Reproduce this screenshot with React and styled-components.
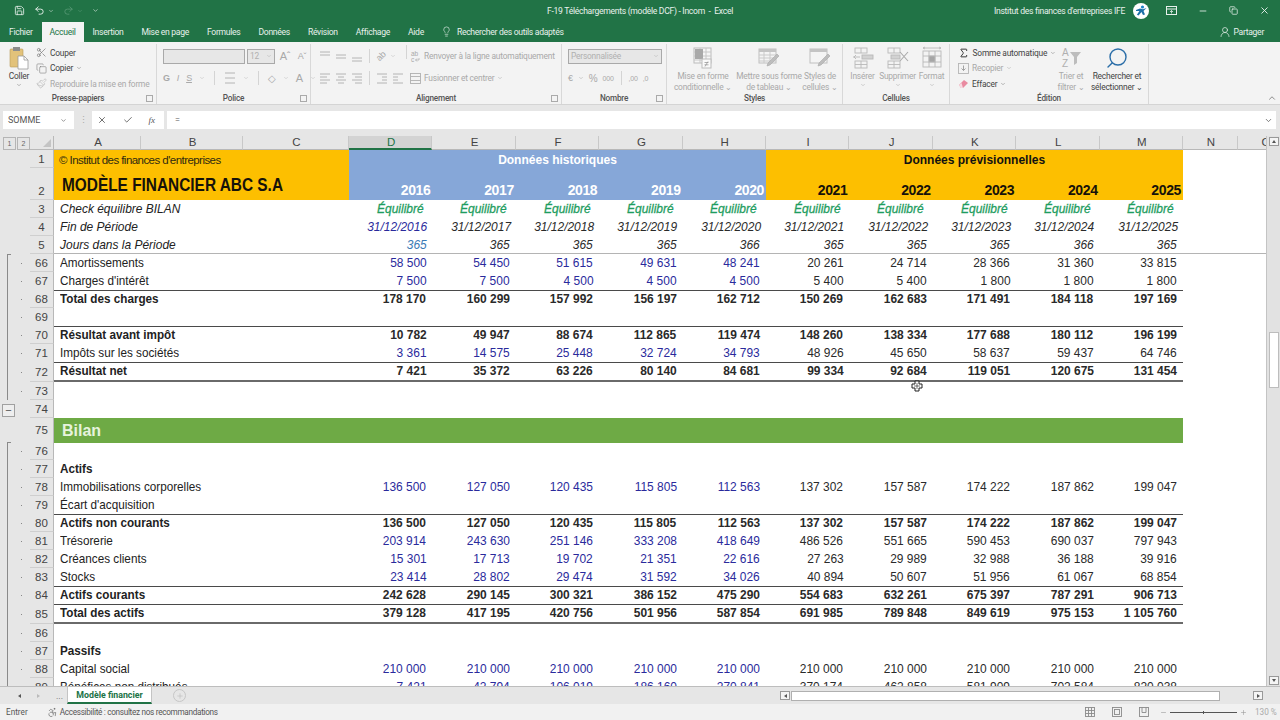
import React from "react";
import styled, { createGlobalStyle } from "styled-components";
import { Save, Undo2, Redo2, Lightbulb, UserRound, Scissors, Copy, Paintbrush, X, Check, ChevronDown, Search, Sigma, ChevronUp, Minus, Plus, Accessibility } from "lucide-react";

const GlobalStyle = createGlobalStyle`
  html, body {
    margin: 0;
    padding: 0;
    background: #e6e6e6;
    overflow: hidden;
  }
`;

const COLUMNS = "30px 24px 87px 102px 106px repeat(10, 83.4px) 55px 55px";
const UI_FONT = `Roboto, "Noto Sans", sans-serif`;
const CELL_FONT = `"Liberation Sans", Arial, sans-serif`;

// Sheet content
const rows = [
  { n: 66, label: "Amortissements", vals: "58 500,54 450,51 615,49 631,48 241,20 261,24 714,28 366,31 360,33 815", start: true },
  { n: 67, label: "Charges d'intérêt", vals: "7 500,7 500,4 500,4 500,4 500,5 400,5 400,1 800,1 800,1 800", line: "thin" },
  { n: 68, label: "Total des charges", bold: true, vals: "178 170,160 299,157 992,156 197,162 712,150 269,162 683,171 491,184 118,197 169" },
  { n: 69, line: "thin" },
  { n: 70, label: "Résultat avant impôt", bold: true, vals: "10 782,49 947,88 674,112 865,119 474,148 260,138 334,177 688,180 112,196 199" },
  { n: 71, label: "Impôts sur les sociétés", vals: "3 361,14 575,25 448,32 724,34 793,48 926,45 650,58 637,59 437,64 746", line: "thin" },
  { n: 72, label: "Résultat net", bold: true, vals: "7 421,35 372,63 226,80 140,84 681,99 334,92 684,119 051,120 675,131 454", line: "thick", h: 20 },
  { n: 73 },
  { n: 74, minus: true },
  { n: 75, section: "Bilan", h: 24, noBar: true },
  { n: 76, start: true },
  { n: 77, label: "Actifs", bold: true },
  { n: 78, label: "Immobilisations corporelles", vals: "136 500,127 050,120 435,115 805,112 563,137 302,157 587,174 222,187 862,199 047" },
  { n: 79, label: "Écart d'acquisition", line: "thin" },
  { n: 80, label: "Actifs non courants", bold: true, vals: "136 500,127 050,120 435,115 805,112 563,137 302,157 587,174 222,187 862,199 047" },
  { n: 81, label: "Trésorerie", vals: "203 914,243 630,251 146,333 208,418 649,486 526,551 665,590 453,690 037,797 943" },
  { n: 82, label: "Créances clients", vals: "15 301,17 713,19 702,21 351,22 616,27 263,29 989,32 988,36 188,39 916" },
  { n: 83, label: "Stocks", vals: "23 414,28 802,29 474,31 592,34 026,40 894,50 607,51 956,61 067,68 854", line: "thin" },
  { n: 84, label: "Actifs courants", bold: true, vals: "242 628,290 145,300 321,386 152,475 290,554 683,632 261,675 397,787 291,906 713", line: "thin" },
  { n: 85, label: "Total des actifs", bold: true, vals: "379 128,417 195,420 756,501 956,587 854,691 985,789 848,849 619,975 153,1 105 760", line: "thick", h: 20 },
  { n: 86 },
  { n: 87, label: "Passifs", bold: true },
  { n: 88, label: "Capital social", vals: "210 000,210 000,210 000,210 000,210 000,210 000,210 000,210 000,210 000,210 000" },
  { n: 89, label: "Bénéfices non distribués", vals: "7 421,42 794,106 019,186 160,270 841,370 174,462 858,581 909,702 584,820 038" },
];
const columnLetters = ["A", "B", "C", "D", "E", "F", "G", "H", "I", "J", "K", "L", "M", "N", "O"];
const years = [2016, 2017, 2018, 2019, 2020, 2021, 2022, 2023, 2024, 2025];

// Shell
const Page = styled.div`
  width: 1280px;
  height: 720px;
  display: flex;
  flex-direction: column;
  overflow: hidden;
  font-family: ${UI_FONT};
`;

const TitleBar = styled.div`
  height: 21px;
  background: #217346;
  color: #e8f1ec;
  display: grid;
  grid-template-columns: 1fr 187px 1fr;
  align-items: center;
  font-size: 8.6px;
  letter-spacing: -0.3px;
`;

const Qat = styled.div`
  display: flex;
  align-items: center;
  gap: 9px;
  padding-left: 14px;
`;

const DocTitle = styled.span`
  white-space: pre;
  text-align: center;
`;

const TitleRight = styled.div`
  display: flex;
  align-items: center;
  justify-content: flex-end;
`;

const WindowBtn = styled.span`
  width: 31px;
  display: flex;
  justify-content: center;
  color: #e8f1ec;
`;

const Avatar = styled.svg`
  width: 16px;
  height: 16px;
  margin: 0 7px 0 8px;
`;

const TabBar = styled.div`
  height: 21px;
  background: #217346;
  display: flex;
  align-items: stretch;
  font-size: 8.6px;
  letter-spacing: -0.3px;
  color: #e8f1ec;
`;

const Tab = styled.div`
  padding: 0 ${(p) => (p.$active ? 8 : 9)}px;
  margin-top: ${(p) => (p.$active ? 1 : 0)}px;
  display: flex;
  align-items: center;
  background: ${(p) => (p.$active ? "#f3f3f3" : "transparent")};
  color: ${(p) => (p.$active ? "#217346" : "inherit")};
`;

const TellMe = styled.div`
  display: flex;
  align-items: center;
  gap: 5px;
  margin-left: 8px;
`;

const Share = styled.div`
  margin-left: auto;
  margin-right: 16px;
  display: flex;
  align-items: center;
  gap: 2px;
`;

// Ribbon
const Ribbon = styled.div`
  height: 63px;
  background: #f3f3f3;
  border-bottom: 1px solid #d4d4d4;
  box-sizing: border-box;
  display: flex;
  position: relative;
  font-size: 8.4px;
  letter-spacing: -0.2px;
  color: #444;
`;

const Group = styled.div`
  width: ${(p) => p.$w}px;
  box-sizing: border-box;
  display: flex;
  flex-direction: column;
  border-right: 1px solid #d8d8d8;
  margin: 2px 0 0;
  position: relative;
  flex-shrink: 0;
`;

const GroupBody = styled.div`
  flex: 1;
  display: flex;
  padding: 1px 0 0 ${(p) => p.$pad || 0}px;
  gap: ${(p) => p.$gap || 0}px;
`;

const GroupLabel = styled.div`
  height: 12px;
  line-height: 12px;
  text-align: center;
  color: #555;
  font-size: 8.2px;
  font-weight: 500;
`;

const Launcher = styled.span`
  position: absolute;
  right: 3px;
  bottom: 2px;
  width: 5px;
  height: 5px;
  border: 1px solid #aaa;
`;

const Stack = styled.div`
  display: flex;
  flex-direction: column;
  margin-left: ${(p) => p.$ml || 0}px;
  width: ${(p) => (p.$w ? `${p.$w}px` : "auto")};
`;

const SmallRow = styled.div`
  height: ${(p) => p.$h || 15.5}px;
  display: flex;
  align-items: center;
  gap: ${(p) => p.$gap ?? 3}px;
  white-space: nowrap;
  color: ${(p) => (p.$off ? "#a9a9a9" : "#444")};
`;

const LargeBtn = styled.div`
  width: ${(p) => p.$w}px;
  display: flex;
  flex-direction: column;
  align-items: center;
  text-align: center;
  line-height: 10.5px;
  white-space: nowrap;
  color: ${(p) => (p.$off ? "#a9a9a9" : "#444")};
  flex-shrink: 0;
`;

const IconZone = styled.div`
  height: 26px;
  display: flex;
  align-items: center;
  justify-content: center;
`;

const Combo = styled.div`
  width: ${(p) => p.$w}px;
  height: 15px;
  box-sizing: border-box;
  border: 1px solid #a9a9a9;
  background: #e7e7e7;
  color: #b0b0b0;
  display: flex;
  align-items: center;
  justify-content: space-between;
  padding: 0 2px;
  font-size: 8.4px;
`;

const OffGlyph = styled.span`
  color: #a9a9a9;
  font-family: ${CELL_FONT};
  font-size: ${(p) => p.$size || 9}px;
  font-weight: ${(p) => p.$weight || 400};
  font-style: ${(p) => (p.$italic ? "italic" : "normal")};
  text-decoration: ${(p) => (p.$under ? "underline" : "none")};
  width: ${(p) => p.$w || "auto"};
  text-align: center;
  transform: ${(p) => (p.$tilt ? "rotate(-45deg)" : "none")};
`;

const ToolSep = styled.span`
  width: 1px;
  height: 14px;
  background: #d4d4d4;
  margin: 0 2px;
`;

const RibbonCaret = styled.span`
  position: absolute;
  right: 3px;
  bottom: 1px;
  color: #777;
  display: flex;
`;

// Formula bar
const FormulaArea = styled.div`
  height: 31px;
  box-sizing: border-box;
  background: #e6e6e6;
  padding: 6px 4px 7px 3px;
  display: flex;
  align-items: stretch;
  font-size: 9px;
  color: #555;
`;

const NameBox = styled.div`
  width: 71px;
  background: #fff;
  display: flex;
  align-items: center;
  justify-content: space-between;
  padding: 0 7px 0 5px;
  box-sizing: border-box;
`;

const Grip = styled.span`
  width: 18px;
  display: flex;
  justify-content: center;
  align-items: center;
  color: #aaa;
`;

const FormulaTools = styled.div`
  width: 72px;
  background: #fff;
  display: flex;
  align-items: center;
  justify-content: space-between;
  padding: 0 9px 0 5px;
  box-sizing: border-box;
  font-family: "Liberation Serif", serif;
  font-style: italic;
`;

const FormulaInput = styled.div`
  flex: 1;
  margin-left: 3px;
  background: #fff;
  display: flex;
  align-items: center;
  justify-content: space-between;
  padding: 0 3px 0 8px;
`;

// Sheet
const SheetArea = styled.div`
  height: 550px;
  display: flex;
  position: relative;
`;

const Grid = styled.div`
  flex: 1;
  min-width: 0;
  overflow: hidden;
  background: #fff;
  font-family: ${CELL_FONT};
  font-size: 13px;
  color: #222;
`;

const GridRow = styled.div`
  display: grid;
  grid-template-columns: ${COLUMNS};
  height: ${(p) => p.$h || 18}px;
  box-sizing: border-box;
`;

const OutlineLevels = styled.div`
  background: #e6e6e6;
  display: flex;
  padding: 1px 0 0 3px;
  gap: 1px;
`;

const LevelBtn = styled.span`
  width: 11px;
  height: 11px;
  border: 1px solid #b5b5b5;
  font-size: 7px;
  color: #666;
  line-height: 11px;
  text-align: center;
`;

const Corner = styled.div`
  background: #e6e6e6;
  border-right: 1px solid #b8b8b8;
  border-bottom: 1px solid #b8b8b8;
  display: flex;
  align-items: flex-end;
  justify-content: flex-end;
  padding: 0 2px 2px 0;
`;

const Triangle = styled.span`
  width: 0;
  height: 0;
  border-left: 8px solid transparent;
  border-bottom: 8px solid #c4c4c4;
`;

const ColHead = styled.div`
  background: ${(p) => (p.$on ? "#d3d3d3" : "#e6e6e6")};
  border-right: 1px solid #c8c8c8;
  border-bottom: ${(p) => (p.$on ? "2px solid #217346" : "1px solid #b8b8b8")};
  box-sizing: border-box;
  color: ${(p) => (p.$on ? "#217346" : "#444")};
  font-size: 11.5px;
  line-height: 13px;
  padding-left: 2px;
  text-align: center;
  overflow: hidden;
`;

const Gutter = styled.div`
  background: #e6e6e6;
  display: flex;
  align-items: stretch;
  padding-left: 7px;
  position: relative;
`;

const OutlineBar = styled.span`
  width: 1px;
  background: ${(p) => (p.$on ? "#8a8a8a" : "transparent")};
  &::after {
    content: "";
    display: ${(p) => (p.$start ? "block" : "none")};
    width: 4px;
    height: 1px;
    background: #8a8a8a;
  }
`;

const Dot = styled.span`
  width: 1px;
  height: 1px;
  background: #888;
  align-self: center;
  margin-left: 13px;
`;

const MinusBox = styled.span`
  position: absolute;
  left: 2px;
  top: 4px;
  width: 11px;
  height: 11px;
  border: 1px solid #a0a0a0;
  background: #eee;
  color: #555;
  font-size: 11px;
  line-height: 10px;
  text-align: center;
`;

const RowHead = styled.div`
  background: #e6e6e6;
  border-right: 1px solid #b8b8b8;
  border-bottom: 1px solid #cfcfcf;
  box-sizing: border-box;
  display: flex;
  align-items: ${(p) => (p.$low ? "flex-end" : "center")};
  justify-content: center;
  padding-bottom: ${(p) => (p.$low ? 2 : 0)}px;
  color: #444;
  font-size: 11.5px;
`;

const Band = styled.div`
  grid-column: span ${(p) => p.$span || 1};
  background: ${(p) => p.$bg};
  color: ${(p) => p.$color || "#111"};
  font-weight: ${(p) => p.$weight || 700};
  font-size: ${(p) => p.$size || 12}px;
  letter-spacing: ${(p) => p.$ls || 0}px;
  text-align: ${(p) => p.$align || "center"};
  padding: 0 ${(p) => p.$padR || 0}px 0 ${(p) => p.$padL || 0}px;
  line-height: ${(p) => p.$lh || "20px"};
  white-space: nowrap;
  overflow: hidden;
`;

const TitleText = styled.span`
  display: inline-block;
  transform: scaleX(0.88);
  transform-origin: left center;
`;

const Fit = styled.span`
  display: inline-block;
  transform: scaleX(${(p) => p.$sx || 0.92});
  transform-origin: ${(p) => (p.$right ? "right" : "left")} center;
`;

const Label = styled.div`
  grid-column: span 3;
  padding-left: 6px;
  line-height: 18px;
  white-space: nowrap;
  font-weight: ${(p) => (p.$bold ? 700 : 400)};
  font-style: ${(p) => (p.$italic ? "italic" : "normal")};
  border-bottom: ${(p) => p.$border || "none"};
`;

const Cell = styled.div`
  text-align: right;
  padding-right: ${(p) => p.$pr || 6}px;
  line-height: 18px;
  white-space: nowrap;
  font-weight: ${(p) => (p.$bold ? 700 : 400)};
  font-style: ${(p) => (p.$italic ? "italic" : "normal")};
  color: ${(p) => p.$color || "#2a2a2a"};
  border-bottom: ${(p) => p.$border || "none"};
  -webkit-text-stroke: ${(p) => (p.$semi ? "0.3px" : "0")};
`;

const Filler = styled.div`
  grid-column: span 2;
`;

const FrozenLine = styled.div`
  grid-column: 3 / -1;
  height: 1px;
  background: #b4b4b4;
  margin-top: -1px;
`;

const SectionBand = styled.div`
  grid-column: span 13;
  background: #6eaa45;
  color: #e6f3dc;
  font-weight: 700;
  font-size: 16px;
  line-height: 25px;
  padding-left: 8px;
`;

const CursorMark = styled.svg`
  position: absolute;
  left: 911px;
  top: 244px;
  width: 12px;
  height: 12px;
`;

const VScroll = styled.div`
  width: 14px;
  background: #e2e2e2;
  border-left: 1px solid #c4c4c4;
  display: flex;
  flex-direction: column;
  align-items: center;
  padding: 1px 0;
  box-sizing: border-box;
`;

const ScrollBtn = styled.span`
  width: 10px;
  height: 9px;
  box-sizing: border-box;
  border: 1px solid #999;
  background: #f4f4f4;
  display: flex;
  align-items: center;
  justify-content: center;
  flex-shrink: 0;
`;

const Arrow = styled.span`
  width: 0;
  height: 0;
  opacity: ${(p) => (p.$dim ? 0.3 : 1)};
  ${(p) =>
    p.$dir === "up" && "border-left: 2.5px solid transparent; border-right: 2.5px solid transparent; border-bottom: 3px solid #555;"}
  ${(p) =>
    p.$dir === "down" && "border-left: 2.5px solid transparent; border-right: 2.5px solid transparent; border-top: 3px solid #555;"}
  ${(p) =>
    p.$dir === "left" && "border-top: 2.5px solid transparent; border-bottom: 2.5px solid transparent; border-right: 3px solid #555;"}
  ${(p) =>
    p.$dir === "right" && "border-top: 2.5px solid transparent; border-bottom: 2.5px solid transparent; border-left: 3px solid #555;"}
`;

const VThumb = styled.span`
  width: 10px;
  height: 56px;
  margin-top: 186px;
  margin-bottom: auto;
  background: #fff;
  border: 1px solid #bdbdbd;
  box-sizing: border-box;
`;

// Sheet tabs and status
const SheetTabs = styled.div`
  height: 18px;
  background: #e6e6e6;
  border-top: 1px solid #bdbdbd;
  box-sizing: border-box;
  display: flex;
  align-items: stretch;
  font-size: 8.8px;
  color: #666;
`;

const TabNav = styled.div`
  width: 67px;
  display: flex;
  align-items: center;
  gap: 16px;
  padding-left: 18px;
  box-sizing: border-box;
`;

const SheetTab = styled.div`
  width: 85px;
  background: #fff;
  color: #217346;
  font-weight: 700;
  border-bottom: 2px solid #217346;
  border-left: 1px solid #c4c4c4;
  border-right: 1px solid #c4c4c4;
  box-sizing: border-box;
  display: flex;
  align-items: center;
  justify-content: center;
`;

const AddSheet = styled.span`
  width: 11px;
  height: 11px;
  border-radius: 50%;
  border: 1px solid #c6c6c6;
  color: #c0c0c0;
  margin: 2px 0 0 21px;
  display: flex;
  align-items: center;
  justify-content: center;
`;

const HScroll = styled.div`
  margin-left: auto;
  width: 483px;
  display: flex;
  align-items: center;
  margin-right: 17px;
`;

const HThumb = styled.span`
  flex: 1;
  height: 10px;
  background: #fff;
  border: 1px solid #b0b0b0;
  box-sizing: border-box;
  margin: 0 33px 0 1px;
`;

const StatusBar = styled.div`
  height: 16px;
  background: #f1f1f1;
  display: flex;
  align-items: center;
  font-size: 8.2px;
  color: #555;
  padding-left: 6px;
`;

const A11y = styled.div`
  display: flex;
  align-items: center;
  gap: 2px;
  margin-left: 19px;
  letter-spacing: -0.3px;
`;

const ViewIcons = styled.div`
  margin-left: auto;
  display: flex;
  align-items: center;
  gap: 17px;
`;

const ZoomSlider = styled.div`
  display: flex;
  align-items: center;
  gap: 3px;
  margin: 0 8px 0 11px;
  color: #999;
`;

const ZoomTrack = styled.span`
  width: 67px;
  height: 1px;
  background: #555;
  display: flex;
  justify-content: center;
  &::after {
    content: "";
    width: 1px;
    height: 3px;
    margin-top: -1px;
    background: #555;
  }
`;

const ZoomValue = styled.span`
  color: #aaa;
  width: 25px;
  white-space: nowrap;
`;

// Small drawings
const LinesIcon = ({ rows: lineRows, color = "#b4b4b4", size = 12 }) => (
  <svg width={size} height={size} viewBox="0 0 12 12">
    {lineRows.map(([y, a, b]) => (
      <line key={y} x1={a} x2={b} y1={y} y2={y} stroke={color} strokeWidth="1" />
    ))}
  </svg>
);

const PasteIcon = () => (
  <svg width="20" height="24" viewBox="0 0 20 24">
    <rect x="1" y="3" width="13" height="18" rx="1" fill="#e2c27a" stroke="#b89a58" strokeWidth=".6" />
    <rect x="4" y="1" width="7" height="4" fill="#8d8d8d" />
    <path d="M9 10h6l4 4v9H9z" fill="#fff" stroke="#9a9a9a" strokeWidth=".8" />
    <path d="M15 10v4h4" fill="none" stroke="#9a9a9a" strokeWidth=".8" />
  </svg>
);

const CondFormatIcon = () => (
  <svg width="20" height="22" viewBox="0 0 20 22">
    <rect x="1" y="1" width="17" height="15" fill="#f6f6f6" stroke="#bcbcbc" />
    <path d="M1 5h17M1 9h17M1 13h17M7 1v15M13 1v15" stroke="#c8c8c8" />
    <rect x="2" y="2" width="8" height="10" fill="#a9a9a9" />
    <rect x="9" y="12" width="9" height="9" fill="#fafafa" stroke="#bbb" />
    <path d="M11.5 15.5h4M11.5 17.8h4M15 14.5l-3 5" stroke="#999" strokeWidth=".8" />
  </svg>
);

const TableBrushIcon = ({ dense }) => (
  <svg width="22" height="20" viewBox="0 0 22 20">
    <rect x="1" y="1" width="17" height="14" fill="#f4f4f4" stroke="#c0c0c0" />
    <rect x="1" y="1" width="17" height="3" fill="#c4c4c4" />
    {dense && <path d="M1 7h17M1 10h17M1 13h17M6 4v11M12 4v11" stroke="#cacaca" />}
    <path d="M21 8l-9 9-3 1 1-3 9-9z" fill="#bdbdbd" stroke="#a8a8a8" strokeWidth=".6" />
  </svg>
);

const CellsIcon = ({ kind }) => (
  <svg width="24" height="24" viewBox="0 0 24 24" fill="none" stroke="#b9b9b9" strokeWidth=".9">
    {kind === "insert" && (
      <>
        <rect x="4" y="2" width="12" height="5" />
        <path d="M10 2v5" />
        <rect x="4" y="15" width="12" height="7" />
        <path d="M10 15v7M4 18.5h12" />
        <rect x="11" y="9" width="11" height="4" fill="#d2d2d2" />
        <path d="M2 11h7M5 9l-2 2 2 2" />
      </>
    )}
    {kind === "delete" && (
      <>
        <rect x="2" y="2" width="12" height="5" />
        <path d="M8 2v5" />
        <rect x="2" y="15" width="12" height="7" />
        <path d="M8 15v7M2 18.5h12" />
        <rect x="5" y="9" width="9" height="4" fill="#d2d2d2" />
        <path d="M14 6l8 9M22 6l-8 9" stroke="#a9a9a9" strokeWidth="1.1" />
      </>
    )}
    {kind === "format" && (
      <>
        <rect x="3" y="5" width="18" height="16" />
        <path d="M3 10h18M3 16h18M9 5v16M15 5v16" />
        <rect x="9" y="10" width="6" height="6" fill="#a6a6a6" />
        <path d="M3 2h18M5 1l-2 1 2 1M19 1l2 1-2 1" />
      </>
    )}
  </svg>
);

const SortIcon = () => (
  <svg width="22" height="22" viewBox="0 0 22 22">
    <text x="2" y="9" fontSize="10" fill="#b0b0b0" fontFamily="Liberation Sans">A</text>
    <text x="2" y="20" fontSize="10" fill="#b0b0b0" fontFamily="Liberation Sans">Z</text>
    <path d="M10 5h11l-4 5v6l-3 2v-8z" fill="#bdbdbd" />
  </svg>
);

const WrapIcon = () => (
  <svg width="11" height="12" viewBox="0 0 11 12">
    <text x="1" y="5.5" fontSize="6.5" fill="#a9a9a9" fontFamily="Liberation Sans">ab</text>
    <text x="1" y="11.5" fontSize="6.5" fill="#a9a9a9" fontFamily="Liberation Sans">c</text>
    <path d="M9 8v2H5.5M7 8.5L5.5 10 7 11.5" fill="none" stroke="#a9a9a9" strokeWidth=".7" />
  </svg>
);

const MergeIcon = () => (
  <svg width="11" height="11" viewBox="0 0 11 11" fill="none" stroke="#b0b0b0" strokeWidth=".9">
    <rect x=".5" y=".5" width="10" height="10" />
    <path d="M.5 3.5h10M.5 7.5h10" />
  </svg>
);

const FillIcon = () => (
  <svg width="11" height="11" viewBox="0 0 11 11" fill="none" stroke="#b5b5b5" strokeWidth=".9">
    <rect x=".5" y=".5" width="10" height="10" />
    <path d="M5.5 2.5v5M3.5 5.5l2 2 2-2" stroke="#999" />
  </svg>
);

const EraserIcon = () => (
  <svg width="11" height="11" viewBox="0 0 11 11">
    <path d="M1 7l5-5 4 3-5 5H3z" fill="#e98aa0" />
    <path d="M1 7l2 3h2L3.5 5z" fill="#f6dbe1" />
  </svg>
);

const RibbonDisplayIcon = () => (
  <svg width="11" height="9" viewBox="0 0 11 9" fill="none" stroke="#e8f1ec">
    <rect x=".5" y=".5" width="10" height="8" />
    <path d="M.5 3h10" />
    <path d="M5.5 7.5V4.5M4 6l1.5-1.5L7 6" strokeWidth=".8" />
  </svg>
);

const ViewIcon = ({ kind }) => (
  <svg width="10" height="10" viewBox="0 0 10 10" fill="none" stroke="#8a8a8a" strokeWidth=".9">
    <rect x=".5" y=".5" width="9" height="9" />
    {kind === "normal" && <path d="M.5 3.5h9M.5 6.5h9M3.5.5v9M6.5.5v9" />}
    {kind === "page" && <rect x="2.5" y="2.5" width="5" height="5" />}
    {kind === "break" && <path d="M3 .5v5h4v-5" />}
  </svg>
);

const AvatarMark = () => (
  <Avatar viewBox="0 0 16 16">
    <circle cx="8" cy="8" r="8" fill="#fff" />
    <circle cx="9.5" cy="4" r="1.6" fill="#1d86c8" />
    <path d="M3 7l4-1.5 3 .8 3.5-1.3-3 3 1.5 3.5-2 .5-1.5-3-3 3.5-1.6-.8 2.5-3.6L3 8z" fill="#1d6fa8" />
  </Avatar>
);

const RibbonPanel = () => (
  <Ribbon>
    <Group $w={157}>
      <GroupBody $pad={7}>
        <LargeBtn $w={24}>
          <IconZone>
            <PasteIcon />
          </IconZone>
          Coller
          <ChevronDown size={6} color="#777" />
        </LargeBtn>
        <Stack $ml={5}>
          <SmallRow>
            <Scissors size={11} color="#666" strokeWidth={1.3} />
            Couper
          </SmallRow>
          <SmallRow>
            <Copy size={11} color="#777" strokeWidth={1.2} />
            Copier
            <ChevronDown size={6} color="#777" />
          </SmallRow>
          <SmallRow $off>
            <Paintbrush size={11} color="#b5b5b5" strokeWidth={1.3} />
            Reproduire la mise en forme
          </SmallRow>
        </Stack>
      </GroupBody>
      <GroupLabel>Presse-papiers</GroupLabel>
      <Launcher />
    </Group>

    <Group $w={154}>
      <GroupBody $pad={6}>
        <Stack>
          <SmallRow $h={22} $gap={2}>
            <Combo $w={82} />
            <Combo $w={28}>
              12
              <ChevronDown size={6} />
            </Combo>
            <OffGlyph $size={11} $w="16px">Aˆ</OffGlyph>
            <OffGlyph $size={9} $w="14px">Aˇ</OffGlyph>
          </SmallRow>
          <SmallRow $h={22} $gap={7}>
            <OffGlyph $weight={700}>G</OffGlyph>
            <OffGlyph $italic>I</OffGlyph>
            <OffGlyph $under>S</OffGlyph>
            <ChevronDown size={6} color="#bbb" />
            <ToolSep />
            <LinesIcon rows={[[1, 1, 11], [6, 1, 11], [11, 1, 11]]} />
            <ChevronDown size={6} color="#bbb" />
            <ToolSep />
            <OffGlyph $size={10}>◇</OffGlyph>
            <ChevronDown size={6} color="#bbb" />
            <OffGlyph $size={11}>A</OffGlyph>
            <ChevronDown size={6} color="#bbb" />
          </SmallRow>
        </Stack>
      </GroupBody>
      <GroupLabel>Police</GroupLabel>
      <Launcher />
    </Group>

    <Group $w={251}>
      <GroupBody $pad={8}>
        <Stack>
          <SmallRow $h={22} $gap={4}>
            <LinesIcon rows={[[2, 1, 11], [5, 1, 11]]} />
            <LinesIcon rows={[[5, 1, 11], [8, 1, 11]]} />
            <LinesIcon rows={[[8, 1, 11], [11, 1, 11]]} />
            <ToolSep />
            <OffGlyph $tilt>ab</OffGlyph>
            <ChevronDown size={6} color="#bbb" />
          </SmallRow>
          <SmallRow $h={22} $gap={4}>
            <LinesIcon rows={[[2, 1, 11], [5, 1, 8], [8, 1, 11], [11, 1, 8]]} />
            <LinesIcon rows={[[2, 1, 11], [5, 3, 9], [8, 1, 11], [11, 3, 9]]} />
            <LinesIcon rows={[[2, 1, 11], [5, 4, 11], [8, 1, 11], [11, 4, 11]]} />
            <ToolSep />
            <LinesIcon rows={[[2, 1, 11], [5, 6, 11], [8, 6, 11], [11, 1, 11]]} />
            <LinesIcon rows={[[2, 1, 11], [5, 1, 6], [8, 1, 6], [11, 1, 11]]} />
          </SmallRow>
        </Stack>
        <ToolSep />
        <Stack $ml={1}>
          <SmallRow $h={22} $off>
            <WrapIcon />
            Renvoyer à la ligne automatiquement
          </SmallRow>
          <SmallRow $h={22} $off>
            <MergeIcon />
            Fusionner et centrer
            <ChevronDown size={6} />
          </SmallRow>
        </Stack>
      </GroupBody>
      <GroupLabel>Alignement</GroupLabel>
      <Launcher />
    </Group>

    <Group $w={105}>
      <GroupBody $pad={6}>
        <Stack>
          <SmallRow $h={22}>
            <Combo $w={94}>
              Personnalisée
              <ChevronDown size={6} />
            </Combo>
          </SmallRow>
          <SmallRow $h={22} $gap={5} $off>
            <OffGlyph $size={9}>€</OffGlyph>
            <ChevronDown size={6} />
            <OffGlyph $size={10}>%</OffGlyph>
            <OffGlyph $size={7}>000</OffGlyph>
            <ToolSep />
            <OffGlyph $size={7}>,00</OffGlyph>
            <OffGlyph $size={7}>,0</OffGlyph>
          </SmallRow>
        </Stack>
      </GroupBody>
      <GroupLabel>Nombre</GroupLabel>
      <Launcher />
    </Group>

    <Group $w={176}>
      <GroupBody $pad={3}>
        <LargeBtn $w={66} $off>
          <IconZone>
            <CondFormatIcon />
          </IconZone>
          Mise en forme
          <br />
          conditionnelle ⌄
        </LargeBtn>
        <LargeBtn $w={66} $off>
          <IconZone>
            <TableBrushIcon dense />
          </IconZone>
          Mettre sous forme
          <br />
          de tableau ⌄
        </LargeBtn>
        <LargeBtn $w={36} $off>
          <IconZone>
            <TableBrushIcon />
          </IconZone>
          Styles de
          <br />
          cellules ⌄
        </LargeBtn>
      </GroupBody>
      <GroupLabel>Styles</GroupLabel>
    </Group>

    <Group $w={107}>
      <GroupBody $pad={3}>
        <LargeBtn $w={33} $off>
          <IconZone>
            <CellsIcon kind="insert" />
          </IconZone>
          Insérer
          <ChevronDown size={6} />
        </LargeBtn>
        <LargeBtn $w={37} $off>
          <IconZone>
            <CellsIcon kind="delete" />
          </IconZone>
          Supprimer
          <ChevronDown size={6} />
        </LargeBtn>
        <LargeBtn $w={31} $off>
          <IconZone>
            <CellsIcon kind="format" />
          </IconZone>
          Format
          <ChevronDown size={6} />
        </LargeBtn>
      </GroupBody>
      <GroupLabel>Cellules</GroupLabel>
    </Group>

    <Group $w={199}>
      <GroupBody $pad={8}>
        <Stack $w={98}>
          <SmallRow>
            <Sigma size={12} color="#333" strokeWidth={2} />
            Somme automatique
            <ChevronDown size={6} color="#777" />
          </SmallRow>
          <SmallRow $off>
            <FillIcon />
            Recopier
            <ChevronDown size={6} />
          </SmallRow>
          <SmallRow>
            <EraserIcon />
            Effacer
            <ChevronDown size={6} color="#777" />
          </SmallRow>
        </Stack>
        <LargeBtn $w={30} $off>
          <IconZone>
            <SortIcon />
          </IconZone>
          Trier et
          <br />
          filtrer ⌄
        </LargeBtn>
        <Stack $ml={5}>
          <LargeBtn $w={52}>
            <IconZone>
              <Search size={24} color="#2b6ea8" strokeWidth={1.4} style={{ transform: "scaleX(-1)" }} />
            </IconZone>
            Rechercher et
            <br />
            sélectionner ⌄
          </LargeBtn>
        </Stack>
      </GroupBody>
      <GroupLabel>Édition</GroupLabel>
    </Group>

    <RibbonCaret>
      <ChevronUp size={10} />
    </RibbonCaret>
  </Ribbon>
);

const GutterFor = ({ row }) => {
  const on = !row.minus && !row.noBar;
  return (
    <Gutter>
      <OutlineBar $on={on} $start={row.start} />
      {row.minus ? <MinusBox>−</MinusBox> : !row.noBar && <Dot />}
    </Gutter>
  );
};

const lineStyle = (line) => {
  if (line === "thin") return "1px solid #4a4a4a";
  if (line === "thick") return "2px solid #6a6a6a";
  return "none";
};

const DataRow = ({ row }) => {
  if (row.section) {
    return (
      <GridRow $h={row.h}>
        <GutterFor row={row} />
        <RowHead>{row.n}</RowHead>
        <SectionBand>{row.section}</SectionBand>
        <Filler />
      </GridRow>
    );
  }
  const border = lineStyle(row.line);
  const values = row.vals ? row.vals.split(",") : Array(10).fill("");
  return (
    <GridRow $h={row.h}>
      <GutterFor row={row} />
      <RowHead>{row.n}</RowHead>
      <Label $bold={row.bold} $border={border}>
        <Fit $sx={0.9}>{row.label}</Fit>
      </Label>
      {values.map((v, i) => (
        <Cell key={i} $bold={row.bold} $border={border} $color={!row.bold && i < 5 ? "#2a2a9c" : undefined}>
          <Fit $right>{v}</Fit>
        </Cell>
      ))}
      <Filler />
    </GridRow>
  );
};

const FrozenRow = ({ n, label, cell, color, pr, semi, frozen }) => (
  <GridRow>
    <Gutter />
    <RowHead>{n}</RowHead>
    <Label $italic>
      <Fit>{label}</Fit>
    </Label>
    {years.map((y, i) => (
      <Cell key={y} $italic $semi={semi} $pr={pr} $color={color(i)}>
        <Fit $right>{cell(y)}</Fit>
      </Cell>
    ))}
    <Filler />
    {frozen && <FrozenLine />}
  </GridRow>
);

export default function App() {
  return (
    <Page>
      <GlobalStyle />
      <TitleBar>
        <Qat>
          <Save size={11} strokeWidth={1.8} />
          <Undo2 size={11} strokeWidth={2} />
          <ChevronDown size={6} style={{ marginLeft: -6 }} />
          <Redo2 size={11} strokeWidth={1.6} color="#5d9c7a" />
          <ChevronDown size={6} color="#5d9c7a" style={{ marginLeft: -6 }} />
          <ChevronDown size={7} />
        </Qat>
        <DocTitle>F-19 Téléchargements (modèle DCF) - Incom  -  Excel</DocTitle>
        <TitleRight>
          Institut des finances d'entreprises IFE
          <AvatarMark />
          <WindowBtn>
            <RibbonDisplayIcon />
          </WindowBtn>
          <WindowBtn>
            <Minus size={10} />
          </WindowBtn>
          <WindowBtn>
            <Copy size={9} />
          </WindowBtn>
          <WindowBtn>
            <X size={11} />
          </WindowBtn>
        </TitleRight>
      </TitleBar>

      <TabBar>
        <Tab>Fichier</Tab>
        <Tab $active>Accueil</Tab>
        <Tab>Insertion</Tab>
        <Tab>Mise en page</Tab>
        <Tab>Formules</Tab>
        <Tab>Données</Tab>
        <Tab>Révision</Tab>
        <Tab>Affichage</Tab>
        <Tab>Aide</Tab>
        <TellMe>
          <Lightbulb size={11} strokeWidth={1.4} />
          Rechercher des outils adaptés
        </TellMe>
        <Share>
          <UserRound size={12} strokeWidth={1.4} />
          Partager
        </Share>
      </TabBar>

      <RibbonPanel />

      <FormulaArea>
        <NameBox>
          SOMME
          <ChevronDown size={7} />
        </NameBox>
        <Grip>⋮</Grip>
        <FormulaTools>
          <X size={10} />
          <Check size={10} />
          fx
        </FormulaTools>
        <FormulaInput>
          =
          <ChevronDown size={9} />
        </FormulaInput>
      </FormulaArea>

      <SheetArea>
        <Grid>
          <GridRow $h={14}>
            <OutlineLevels>
              <LevelBtn>1</LevelBtn>
              <LevelBtn>2</LevelBtn>
            </OutlineLevels>
            <Corner>
              <Triangle />
            </Corner>
            {columnLetters.map((c) => (
              <ColHead key={c} $on={c === "D"}>
                {c}
              </ColHead>
            ))}
          </GridRow>

          <GridRow>
            <Gutter />
            <RowHead>1</RowHead>
            <Band $span={3} $bg="#fdbf00" $weight={400} $size={11.5} $ls={-0.55} $align="left" $padL={5} $color="#2f2a10">
              © Institut des finances d'entreprises
            </Band>
            <Band $span={5} $bg="#86a7d8" $color="#fff">
              Données historiques
            </Band>
            <Band $span={5} $bg="#fdbf00">
              Données prévisionnelles
            </Band>
            <Filler />
          </GridRow>

          <GridRow $h={32}>
            <Gutter />
            <RowHead $low>2</RowHead>
            <Band $span={3} $bg="#fdbf00" $size={17.5} $align="left" $padL={8} $lh="34px" $color="#16120a">
              <TitleText>MODÈLE FINANCIER ABC S.A</TitleText>
            </Band>
            {years.map((y, i) => (
              <Band
                key={y}
                $bg={i < 5 ? "#86a7d8" : "#fdbf00"}
                $color={i < 5 ? "#fff" : "#16120a"}
                $size={14}
                $ls={-0.4}
                $align="right"
                $padR={2}
                $lh="44px"
              >
                {y}
              </Band>
            ))}
            <Filler />
          </GridRow>

          <FrozenRow n={3} label="Check équilibre BILAN" cell={() => "Équilibré"} color={() => "#1f9d5f"} pr={9} semi />
          <FrozenRow
            n={4}
            label="Fin de Période"
            cell={(y) => `31/12/${y}`}
            color={(i) => (i === 0 ? "#2a2a9c" : "#2a2a2a")}
            pr={5}
          />
          <FrozenRow
            n={5}
            label="Jours dans la Période"
            cell={(y) => (y === 2020 || y === 2024 ? 366 : 365)}
            color={(i) => (i === 0 ? "#3a7ab5" : "#2a2a2a")}
            pr={6}
            frozen
          />

          {rows.map((row) => (
            <DataRow key={row.n} row={row} />
          ))}
        </Grid>

        <VScroll>
          <ScrollBtn>
            <Arrow $dir="up" />
          </ScrollBtn>
          <VThumb />
          <ScrollBtn>
            <Arrow $dir="down" />
          </ScrollBtn>
        </VScroll>

        <CursorMark viewBox="0 0 12 12">
          <path d="M4 1h4v3h3v4H8v3H4V8H1V4h3z" fill="#fff" stroke="#222" strokeWidth="1" />
          <path d="M6 3v6M3 6h6" stroke="#222" strokeWidth=".6" />
        </CursorMark>
      </SheetArea>

      <SheetTabs>
        <TabNav>
          <Arrow $dir="left" />
          <Arrow $dir="right" $dim />
          <span>...</span>
        </TabNav>
        <SheetTab>Modèle financier</SheetTab>
        <AddSheet>
          <Plus size={8} />
        </AddSheet>
        <HScroll>
          <ScrollBtn>
            <Arrow $dir="left" />
          </ScrollBtn>
          <HThumb />
          <ScrollBtn>
            <Arrow $dir="right" />
          </ScrollBtn>
        </HScroll>
      </SheetTabs>

      <StatusBar>
        Entrer
        <A11y>
          <Accessibility size={11} strokeWidth={1.3} />
          Accessibilité : consultez nos recommandations
        </A11y>
        <ViewIcons>
          <ViewIcon kind="normal" />
          <ViewIcon kind="page" />
          <ViewIcon kind="break" />
        </ViewIcons>
        <ZoomSlider>
          <Minus size={7} />
          <ZoomTrack />
          <Plus size={7} />
        </ZoomSlider>
        <ZoomValue>130 %</ZoomValue>
      </StatusBar>
    </Page>
  );
}
